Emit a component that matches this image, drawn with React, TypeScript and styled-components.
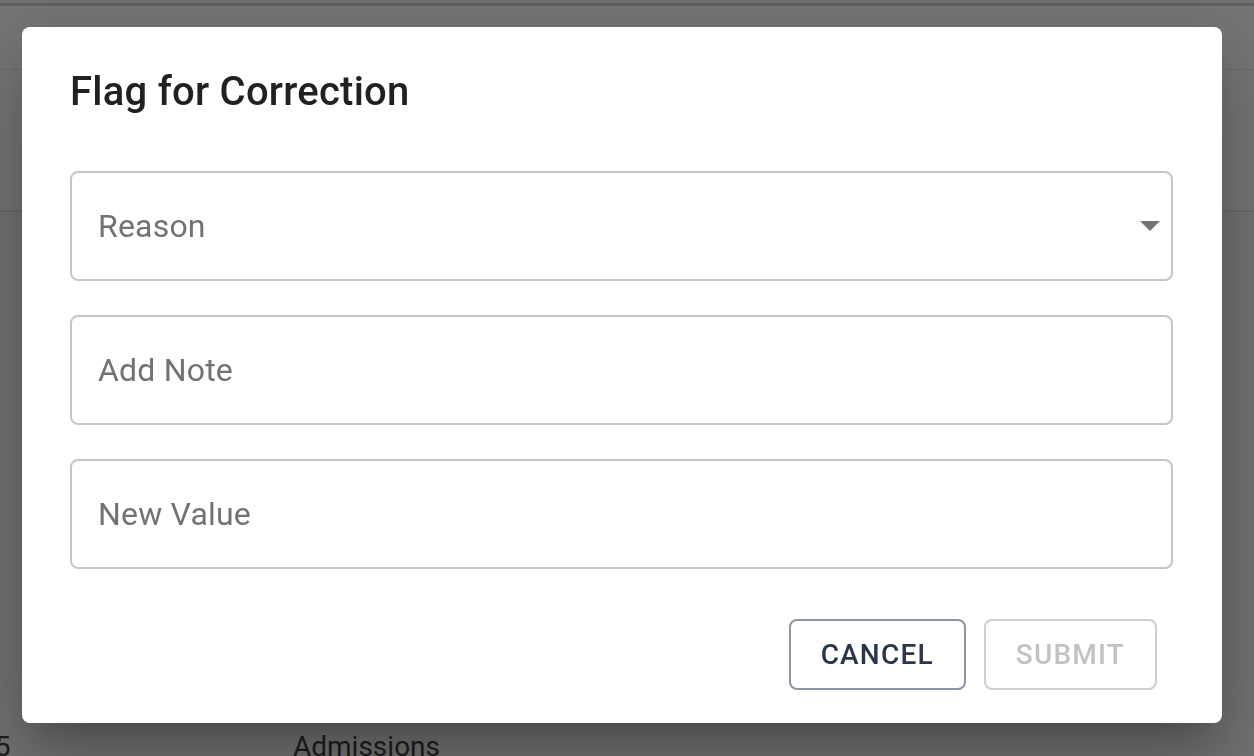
import React from 'react';
import styled, { createGlobalStyle } from 'styled-components';

const GlobalStyle = createGlobalStyle`
  html, body {
    margin: 0;
    padding: 0;
    width: 1254px;
    height: 756px;
    overflow: hidden;
    background: #747474;
    font-family: Roboto, "Liberation Sans", Arial, sans-serif;
  }
  * { box-sizing: border-box; }
`;

const Page = styled.div`
  width: 1254px;
  height: 756px;
  display: flex;
  flex-direction: column;
  background: #737373;
  overflow: hidden;
`;

const TopStrip = styled.div`
  height: 3px;
  background: #727272;
  border-bottom: 3px solid #626262;
  box-sizing: content-box;
`;

const Toolbar = styled.div`
  height: 64px;
  background: #767676;
  border-bottom: 1px solid #6c6c6c;
`;

const HeaderBand = styled.div`
  height: 142px;
  background: #767676;
  border-bottom: 2px solid #6a6a6a;
`;

const Rows = styled.div`
  flex: 1;
  display: flex;
  flex-direction: column;
  justify-content: flex-end;
`;

const Row = styled.div`
  display: grid;
  grid-template-columns: 314px 1fr;
  height: 26px;
  font-size: 28px;
  line-height: 34px;
  color: #1d1d1d;
  margin-left: -21px;
`;

const Overlay = styled.div`
  position: fixed;
  inset: 0;
  display: flex;
  align-items: flex-start;
  justify-content: flex-start;
  padding: 27px 0 0 22px;
`;

const Dialog = styled.div`
  width: 1200px;
  height: 696px;
  background: #ffffff;
  border-radius: 8px;
  padding: 41px 49px 32px 48px;
  display: flex;
  flex-direction: column;
  box-shadow:
    0 22px 30px -14px rgba(0, 0, 0, 0.2),
    0 48px 76px 6px rgba(0, 0, 0, 0.14),
    0 18px 92px 16px rgba(0, 0, 0, 0.12);
`;

const Title = styled.h2`
  margin: 0 0 55px;
  font-size: 40px;
  line-height: 48px;
  font-weight: 500;
  color: #212121;
  letter-spacing: 0.25px;
`;

const Fields = styled.div`
  display: flex;
  flex-direction: column;
  gap: 34px;
`;

const Field = styled.div<{ $select?: boolean }>`
  height: 110px;
  border: 2px solid #c6c6c6;
  border-radius: 8px;
  display: flex;
  align-items: center;
  padding: 0 ${p => (p.$select ? '11px' : '28px')} 0 26px;
`;

const Placeholder = styled.span`
  flex: 1;
  font-size: 32px;
  color: #727272;
  letter-spacing: 0.2px;
`;

const Actions = styled.div`
  margin-top: 50px;
  display: flex;
  justify-content: flex-end;
  gap: 18px;
  padding-right: 16px;
`;

const Button = styled.button<{ $disabled?: boolean }>`
  height: 71px;
  padding: 0 30px;
  background: #fff;
  border: 2px solid ${p => (p.$disabled ? '#cfcfcf' : '#8d95a3')};
  border-radius: 8px;
  font-family: Roboto, "Liberation Sans", Arial, sans-serif;
  font-size: 28px;
  font-weight: 500;
  letter-spacing: 1.2px;
  text-transform: uppercase;
  color: ${p => (p.$disabled ? '#c2c2c2' : '#2a3649')};
  cursor: ${p => (p.$disabled ? 'default' : 'pointer')};
`;

const ArrowDropDown = () => (
  <svg width="20" height="10" viewBox="7 10 10 5" fill="#757575">
    <path d="M7 10l5 5 5-5z" />
  </svg>
);

export default function App() {
  return (
    <>
      <GlobalStyle />
      <Page>
        <TopStrip />
        <Toolbar />
        <HeaderBand />
        <Rows>
          <Row>
            <span>15</span>
            <span>Admissions</span>
          </Row>
        </Rows>
      </Page>
      <Overlay>
        <Dialog>
          <Title>Flag for Correction</Title>
          <Fields>
            <Field $select>
              <Placeholder>Reason</Placeholder>
              <ArrowDropDown />
            </Field>
            <Field>
              <Placeholder>Add Note</Placeholder>
            </Field>
            <Field>
              <Placeholder>New Value</Placeholder>
            </Field>
          </Fields>
          <Actions>
            <Button>Cancel</Button>
            <Button $disabled disabled>Submit</Button>
          </Actions>
        </Dialog>
      </Overlay>
    </>
  );
}
